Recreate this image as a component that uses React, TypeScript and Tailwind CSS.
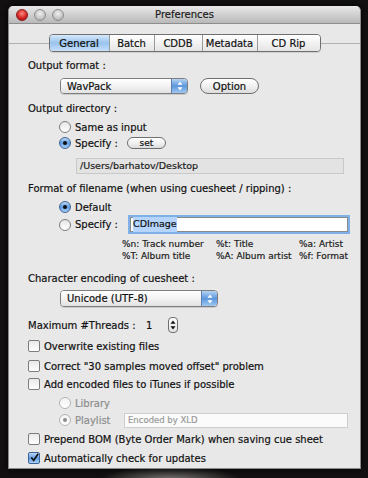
import React from "react"

const font = "font-['DejaVu_Sans',sans-serif] [-webkit-text-stroke:0.2px_currentColor]"

function Radio({ on = false, disabled = false }: { on?: boolean; disabled?: boolean }) {
  if (disabled) {
    return (
      <span className="w-[12px] h-[12px] rounded-full border border-[#b4b4b4] bg-linear-to-b from-[#f2f2f2] to-[#ffffff] flex items-center justify-center shrink-0">
        {on && <span className="w-[4px] h-[4px] rounded-full bg-[#8c8c8c]" />}
      </span>
    )
  }
  return on ? (
    <span className="w-[12px] h-[12px] rounded-full border border-[#3d6496] bg-linear-to-b from-[#bcd8f6] via-[#5f9ae2] to-[#a9d0f7] flex items-center justify-center shrink-0">
      <span className="w-[4px] h-[4px] rounded-full bg-[#0e0e0e]" />
    </span>
  ) : (
    <span className="w-[12px] h-[12px] rounded-full border border-[#7c7c7c] bg-linear-to-b from-[#e6e6e6] to-[#ffffff] shrink-0" />
  )
}

function Check({ on = false }: { on?: boolean }) {
  return on ? (
    <span className="w-[12px] h-[12px] rounded-[2px] border border-[#3d6496] bg-linear-to-b from-[#bcd8f6] via-[#5f9ae2] to-[#a9d0f7] flex items-center justify-center shrink-0">
      <svg width="11" height="11" viewBox="0 0 11 11" className="-mt-[2px] ml-[1px]">
        <path d="M1.5 5.5 L4.5 9 L10 1" fill="none" stroke="#111" strokeWidth="2" />
      </svg>
    </span>
  ) : (
    <span className="w-[12px] h-[12px] rounded-[2px] border border-[#7c7c7c] bg-linear-to-b from-[#e9e9e9] to-[#ffffff] shrink-0" />
  )
}

function Arrows({ color = "#fff" }: { color?: string }) {
  return (
    <svg width="6" height="10" viewBox="0 0 6 10">
      <path d="M3 0.5 L5.5 3.8 L0.5 3.8 Z" fill={color} />
      <path d="M3 9.5 L5.5 6.2 L0.5 6.2 Z" fill={color} />
    </svg>
  )
}

function Popup({ label, width }: { label: string; width: string }) {
  return (
    <div className={`flex h-full ${width} rounded-[4px] border border-[#7e7e7e] overflow-hidden shadow-[0_1px_0_rgba(0,0,0,0.12)]`}>
      <div className="flex-1 flex items-center pl-[6px] bg-linear-to-b from-[#ffffff] via-[#f3f3f3] to-[#e2e2e2] text-[10px] text-[#111]">
        {label}
      </div>
      <div className="w-[16px] flex items-center justify-center border-l border-[#5b80ad] bg-linear-to-b from-[#b6d4f3] via-[#5b97dc] to-[#9fc8f2]">
        <Arrows />
      </div>
    </div>
  )
}

function Row({ h = "h-[16px]", mt, className = "", children }: { h?: string; mt: string; className?: string; children: React.ReactNode }) {
  return <div className={`flex items-center ${h} ${mt} ${className}`}>{children}</div>
}

export default function App() {
  const tabs = [
    { name: "General", w: "w-[59px]" },
    { name: "Batch", w: "w-[45px]" },
    { name: "CDDB", w: "w-[48px]" },
    { name: "Metadata", w: "w-[55px]" },
    { name: "CD Rip", w: "w-[63px]" },
  ]

  return (
    <div className={`w-[368px] h-[478px] overflow-hidden pt-[6px] pl-[8px] bg-[#131111] bg-[radial-gradient(ellipse_70px_14px_at_170px_480px,#7d7a78,transparent)] ${font}`}>
      <div className="w-[353px] h-[463px] rounded-t-[5px] bg-[#e8e8e8] shadow-[0_0_10px_rgba(0,0,0,0.9)] border-x border-b border-[#8a8a8a] flex flex-col">
        {/* title bar */}
        <div className="h-[18px] rounded-t-[5px] bg-linear-to-b from-[#e9e9e9] to-[#b9b9b9] border-b border-[#8d8d8d] flex items-center relative">
          <div className="flex items-center gap-[6px] pl-[7px]">
            <span className="w-[12px] h-[12px] rounded-full border border-[#8a1c1c] bg-[radial-gradient(circle_at_50%_35%,#ff8a80,#d21f1f_60%,#8e0f0f)]" />
            <span className="w-[12px] h-[12px] rounded-full border border-[#8e8e8e] bg-[radial-gradient(circle_at_50%_35%,#f0f0f0,#c4c4c4_60%,#a8a8a8)]" />
            <span className="w-[12px] h-[12px] rounded-full border border-[#8e8e8e] bg-[radial-gradient(circle_at_50%_35%,#f0f0f0,#c4c4c4_60%,#a8a8a8)]" />
          </div>
          <span className="absolute inset-0 flex items-center justify-center text-[10px] text-[#1c1c1c]">Preferences</span>
        </div>

        {/* tabs */}
        <div className="flex items-center h-[18px] mt-[10px]">
          <div className="flex-1 h-px bg-[#b0b0b0]" />
          <div className="flex h-[18px] rounded-[4px] border border-[#6f6f6f] overflow-hidden shadow-[0_1px_0_rgba(0,0,0,0.1)]">
            {tabs.map((t, i) => (
              <div
                key={t.name}
                className={`${t.w} flex items-center justify-center text-[10px] text-[#111] ${i > 0 ? "border-l border-[#9a9a9a]" : ""} ${
                  i === 0
                    ? "bg-linear-to-b from-[#d6e8fa] via-[#98c3ee] to-[#c6e0fa]"
                    : "bg-linear-to-b from-[#ffffff] via-[#f2f2f2] to-[#e4e4e4]"
                }`}
              >
                {t.name}
              </div>
            ))}
          </div>
          <div className="flex-1 h-px bg-[#b0b0b0]" />
        </div>

        <div className="pl-[19px] text-[10px] text-[#111] flex flex-col">
          <Row mt="mt-[5px]">Output format :</Row>
          <Row mt="mt-[5px]" className="pl-[32px] gap-[12px]">
            <Popup label="WavPack" width="w-[128px]" />
            <button className="h-full w-[59px] rounded-full border border-[#6f6f6f] bg-linear-to-b from-[#ffffff] via-[#f1f1f1] to-[#dcdcdc] text-[10px] text-[#111] flex items-center justify-center">
              Option
            </button>
          </Row>
          <Row mt="mt-[6px]">Output directory :</Row>
          <Row mt="mt-[3px]" className="pl-[31px] gap-[4px]">
            <Radio />
            <span>Same as input</span>
          </Row>
          <Row mt="mt-0" className="pl-[31px] gap-[4px]">
            <Radio on />
            <span className="w-[48px]">Specify :</span>
            <button className="h-[12px] w-[39px] rounded-full border border-[#6f6f6f] bg-linear-to-b from-[#ffffff] via-[#f1f1f1] to-[#dcdcdc] text-[9px] leading-none flex items-center justify-center">
              set
            </button>
          </Row>
          <Row mt="mt-[7px]" className="pl-[48px]">
            <div className="h-full w-[268px] bg-[#e3e3e3] border border-[#c9c9c9] flex items-center pl-[3px] text-[9.5px] text-[#222]">
              /Users/barhatov/Desktop
            </div>
          </Row>
          <Row mt="mt-[6px]">Format of filename (when using cuesheet / ripping) :</Row>
          <Row mt="mt-[3px]" className="pl-[31px] gap-[4px]">
            <Radio on />
            <span>Default</span>
          </Row>
          <Row h="h-[17px]" mt="mt-[1px]" className="pl-[31px] gap-[4px]">
            <Radio />
            <span className="w-[51px]">Specify :</span>
            <div className="h-[15px] w-[218px] bg-white border border-[#8a8a8a] shadow-[0_0_0_2px_#7fb0e8] flex items-center pl-[2px] text-[9.5px]">
              <span className="bg-[#b5d5ff]">CDImage</span>
            </div>
          </Row>
          <div className="mt-[5px] pl-[94px] grid grid-cols-[94px_83px_1fr] text-[9px] leading-[12px] text-[#222]">
            <span>%n: Track number</span>
            <span>%t: Title</span>
            <span>%a: Artist</span>
            <span>%T: Album title</span>
            <span>%A: Album artist</span>
            <span>%f: Format</span>
          </div>
          <Row mt="mt-[8px]">Character encoding of cuesheet :</Row>
          <Row h="h-[17px]" mt="mt-[4px]" className="pl-[32px]">
            <Popup label="Unicode (UTF-8)" width="w-[158px]" />
          </Row>
          <Row h="h-[18px]" mt="mt-[9px]">
            <span className="w-[118px]">Maximum #Threads :</span>
            <span className="w-[22px]">1</span>
            <div className="w-[10px] h-[16px] rounded-[4px] border border-[#6f6f6f] bg-linear-to-b from-[#ffffff] to-[#e4e4e4] flex items-center justify-center">
              <Arrows color="#111" />
            </div>
          </Row>
          <Row mt="mt-[4px]" className="gap-[4px]">
            <Check />
            <span>Overwrite existing files</span>
          </Row>
          <Row mt="mt-[4px]" className="gap-[4px]">
            <Check />
            <span>Correct "30 samples moved offset" problem</span>
          </Row>
          <Row mt="mt-[2px]" className="gap-[4px]">
            <Check />
            <span>Add encoded files to iTunes if possible</span>
          </Row>
          <Row mt="mt-[3px]" className="pl-[31px] gap-[4px] text-[#8d8d8d]">
            <Radio disabled />
            <span>Library</span>
          </Row>
          <Row mt="mt-[1px]" className="pl-[31px] gap-[4px] text-[#8d8d8d]">
            <Radio disabled on />
            <span className="w-[45px]">Playlist</span>
            <div className="h-[15px] w-[224px] bg-[#fbfbfb] border border-[#cfcfcf] flex items-center pl-[3px] text-[8.5px] text-[#9a9a9a]">
              Encoded by XLD
            </div>
          </Row>
          <Row mt="mt-[3px]" className="gap-[4px]">
            <Check />
            <span>Prepend BOM (Byte Order Mark) when saving cue sheet</span>
          </Row>
          <Row mt="mt-[3px]" className="gap-[4px]">
            <Check on />
            <span>Automatically check for updates</span>
          </Row>
        </div>
      </div>
    </div>
  )
}
